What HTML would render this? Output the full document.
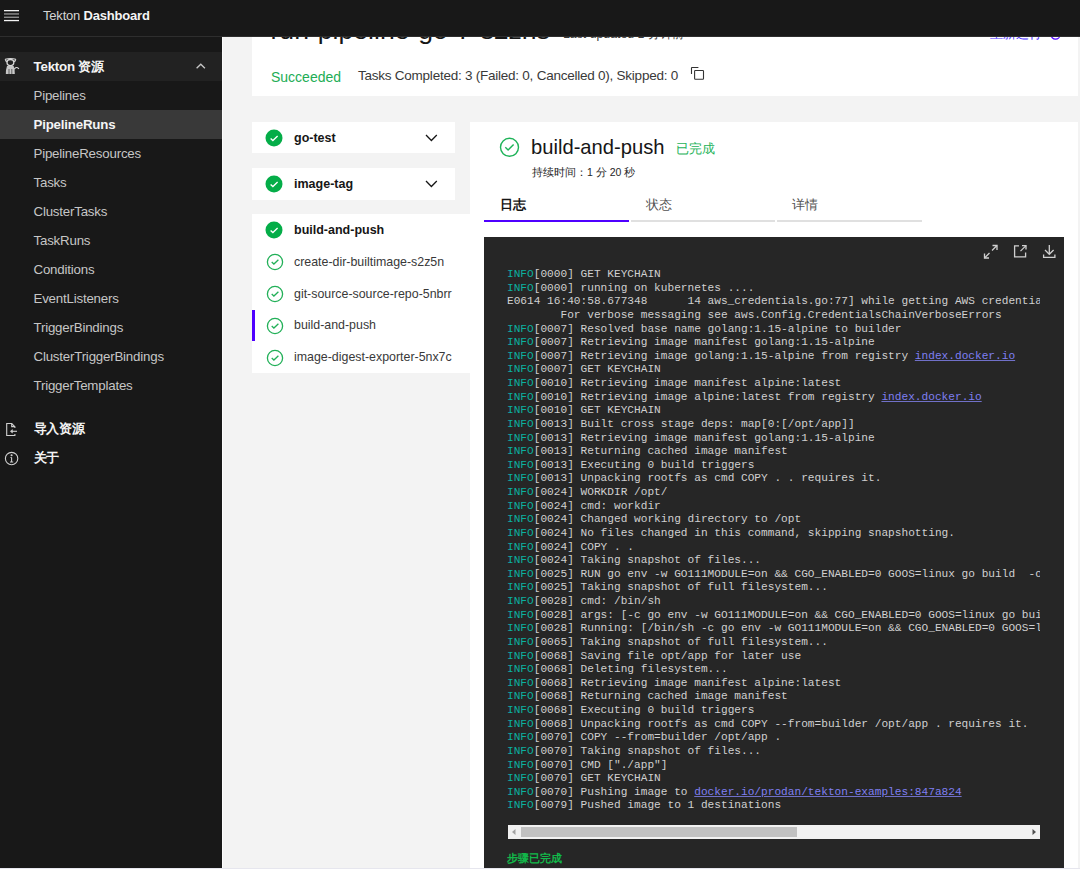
<!DOCTYPE html>
<html><head><meta charset="utf-8">
<style>
*{box-sizing:border-box;margin:0;padding:0}
html,body{width:1080px;height:869px;overflow:hidden;background:#f3f3f3;font-family:"Liberation Sans",sans-serif;position:relative}
.abs{position:absolute}
.t{position:absolute;white-space:nowrap}
#hdr{position:absolute;left:0;top:0;width:1080px;height:37px;background:#181818;border-bottom:1px solid #2e2e2e;z-index:10}
#side{position:absolute;left:0;top:37px;width:222px;height:832px;background:#181818;z-index:5}
.nav{position:absolute;left:0;width:222px;height:29px;color:#c6c6c6;font-size:13.3px;letter-spacing:-0.2px;line-height:29px;padding-left:33.5px;white-space:nowrap}
.card{position:absolute;background:#fff}
.log{position:absolute;left:507px;top:268px;width:533px;height:554px;overflow:hidden;font-family:"Liberation Mono",monospace;font-size:11.15px;line-height:13.62px;color:#d0d0d0;white-space:pre}
.log .i{color:#0cb0a0}
.log a{color:#7f7ff2;text-decoration:underline;text-decoration-color:#7070c8}
.step{position:absolute;left:294px;font-size:12.4px;color:#393939;white-space:nowrap;line-height:16px}
.tab{position:absolute;top:220px;height:2px;background:#e0e0e0}
</style></head><body>

<!-- page header title (scrolled under header) -->
<div class="card" style="left:252px;top:0;width:826px;height:96px"></div>
<div class="t" style="left:270.5px;top:14.5px;font-size:26.6px;line-height:30px;color:#161616">run-pipeline-go-7-s2zns</div>
<div class="t" style="left:563px;top:26px;font-size:12.3px;line-height:16px;color:#393939">Last updated 1 分钟前</div>
<div class="t" style="left:990px;top:25.8px;font-size:12.6px;line-height:16px;color:#4a2dff">重新运行</div>
<svg class="abs" style="left:1049px;top:28px" width="14" height="14" viewBox="0 0 14 14"><circle cx="6.5" cy="6.5" r="4.6" fill="none" stroke="#4f00ff" stroke-width="1.2"/></svg>
<div class="t" style="left:271px;top:67.5px;font-size:14px;line-height:18px;color:#22ad55">Succeeded</div>
<div class="t" style="left:358px;top:67px;font-size:13.5px;letter-spacing:-0.24px;line-height:18px;color:#393939">Tasks Completed: 3 (Failed: 0, Cancelled 0), Skipped: 0</div>
<svg class="abs" style="left:690px;top:66px" width="16" height="16" viewBox="0 0 16 16" fill="none" stroke="#333" stroke-width="1.1">
  <path d="M1.5 8.1 V2 Q1.5 1.5 2 1.5 H8.4"/>
  <rect x="4.6" y="4.5" width="8.9" height="8.8" rx="0.7"/>
</svg>

<!-- task cards -->
<div class="card" style="left:252px;top:122px;width:203px;height:31px"></div>
<div class="card" style="left:252px;top:168px;width:203px;height:32px"></div>
<div class="card" style="left:252px;top:214px;width:218px;height:159px"></div>
<div class="abs" style="left:470px;top:122px;width:0;height:0"></div>

<svg class="abs" style="left:264.0px;top:127.6px" width="20" height="20" viewBox="0 0 20 20"><circle cx="10" cy="10" r="8.5" fill="#04ad48"/><path d="M6.6 10.4 L8.9 12.5 L13.6 8" fill="none" stroke="#fff" stroke-width="1.3"/></svg>
<div class="t" style="left:294px;top:130px;font-size:12.5px;font-weight:bold;line-height:16px;color:#161616">go-test</div>
<svg class="abs" style="left:425px;top:134px" width="13" height="8" viewBox="0 0 13 8"><path d="M1 1 L6.4 6.5 L11.8 1" fill="none" stroke="#161616" stroke-width="1.3"/></svg>
<svg class="abs" style="left:264.0px;top:173.6px" width="20" height="20" viewBox="0 0 20 20"><circle cx="10" cy="10" r="8.5" fill="#04ad48"/><path d="M6.6 10.4 L8.9 12.5 L13.6 8" fill="none" stroke="#fff" stroke-width="1.3"/></svg>
<div class="t" style="left:294px;top:176px;font-size:12.5px;font-weight:bold;line-height:16px;color:#161616">image-tag</div>
<svg class="abs" style="left:425px;top:180px" width="13" height="8" viewBox="0 0 13 8"><path d="M1 1 L6.4 6.5 L11.8 1" fill="none" stroke="#161616" stroke-width="1.3"/></svg>
<svg class="abs" style="left:264.0px;top:220.1px" width="20" height="20" viewBox="0 0 20 20"><circle cx="10" cy="10" r="8.5" fill="#04ad48"/><path d="M6.6 10.4 L8.9 12.5 L13.6 8" fill="none" stroke="#fff" stroke-width="1.3"/></svg>
<div class="t" style="left:294px;top:222px;font-size:12.5px;font-weight:bold;line-height:16px;color:#161616">build-and-push</div>

<svg class="abs" style="left:264.5px;top:252.3px" width="20" height="20" viewBox="0 0 20 20"><circle cx="10" cy="10" r="7.6" fill="none" stroke="#22b058" stroke-width="1.3"/><path d="M6.7 10 L8.9 12 L13.4 7.7" fill="none" stroke="#22b058" stroke-width="1.3"/></svg>
<div class="step" style="top:254px">create-dir-builtimage-s2z5n</div>
<svg class="abs" style="left:264.5px;top:284.0px" width="20" height="20" viewBox="0 0 20 20"><circle cx="10" cy="10" r="7.6" fill="none" stroke="#22b058" stroke-width="1.3"/><path d="M6.7 10 L8.9 12 L13.4 7.7" fill="none" stroke="#22b058" stroke-width="1.3"/></svg>
<div class="step" style="top:286px">git-source-source-repo-5nbrr</div>
<div class="abs" style="left:252px;top:310px;width:3px;height:31px;background:#4f00ff"></div>
<svg class="abs" style="left:264.5px;top:315.6px" width="20" height="20" viewBox="0 0 20 20"><circle cx="10" cy="10" r="7.6" fill="none" stroke="#22b058" stroke-width="1.3"/><path d="M6.7 10 L8.9 12 L13.4 7.7" fill="none" stroke="#22b058" stroke-width="1.3"/></svg>
<div class="step" style="top:317px">build-and-push</div>
<svg class="abs" style="left:264.5px;top:347.6px" width="20" height="20" viewBox="0 0 20 20"><circle cx="10" cy="10" r="7.6" fill="none" stroke="#22b058" stroke-width="1.3"/><path d="M6.7 10 L8.9 12 L13.4 7.7" fill="none" stroke="#22b058" stroke-width="1.3"/></svg>
<div class="step" style="top:349px">image-digest-exporter-5nx7c</div>

<!-- right panel -->
<div class="card" style="left:470px;top:122px;width:608px;height:747px"></div>
<svg class="abs" style="left:499px;top:137px" width="21" height="21" viewBox="0 0 21 21"><circle cx="10.5" cy="10.3" r="9" fill="none" stroke="#1fb359" stroke-width="1.4"/><path d="M6.3 10.3 L9.1 13 L14.6 7.5" fill="none" stroke="#1fb359" stroke-width="1.4"/></svg>
<div class="t" style="left:531px;top:135px;font-size:20.2px;line-height:24px;color:#161616">build-and-push</div>
<div class="t" style="left:675.5px;top:139.5px;font-size:13.3px;line-height:18px;color:#1db359">已完成</div>
<div class="t" style="left:532px;top:165px;font-size:10.5px;line-height:14px;color:#262626">持续时间：1 分 20 秒</div>

<div class="t" style="left:499.5px;top:196px;font-size:13.3px;font-weight:bold;line-height:18px;color:#161616">日志</div>
<div class="t" style="left:646px;top:196px;font-size:13.3px;line-height:18px;color:#525252">状态</div>
<div class="t" style="left:792px;top:196px;font-size:13.3px;line-height:18px;color:#525252">详情</div>
<div class="tab" style="left:484px;width:145px;background:#4f00ff"></div>
<div class="tab" style="left:631px;width:144px"></div>
<div class="tab" style="left:777px;width:145px"></div>

<div class="abs" style="left:484px;top:237px;width:580px;height:631px;background:#262626"></div>
<svg class="abs" style="left:983px;top:244px" width="16" height="16" viewBox="0 0 16 16" fill="none" stroke="#d0d0d0" stroke-width="1.3">
  <path d="M9.5 1.5 H14 V6"/><path d="M14 1.5 L9 6.5"/><path d="M1.5 9.5 V14 H6"/><path d="M1.5 14 L6.5 9"/>
</svg>
<svg class="abs" style="left:1013px;top:244px" width="16" height="16" viewBox="0 0 16 16" fill="none" stroke="#d0d0d0" stroke-width="1.3">
  <path d="M6 1.8 H1.6 V12.8 H12.6 V8.5"/><path d="M9 1.6 H13 V5.6"/><path d="M13 1.6 L7.5 7.1"/>
</svg>
<svg class="abs" style="left:1042px;top:244px" width="16" height="16" viewBox="0 0 16 16" fill="none" stroke="#d0d0d0" stroke-width="1.3">
  <path d="M7.3 1 V10"/><path d="M3 6 L7.3 10.3 L11.6 6"/><path d="M1.6 10.5 V13.3 H12.9 V10.5"/>
</svg>

<div class="log"><span class="i">INFO</span>[0000] GET KEYCHAIN
<span class="i">INFO</span>[0000] running on kubernetes ....
E0614 16:40:58.677348      14 aws_credentials.go:77] while getting AWS credentials NoCredentialProviders: no valid providers in chain. Deprecated.
        For verbose messaging see aws.Config.CredentialsChainVerboseErrors
<span class="i">INFO</span>[0007] Resolved base name golang:1.15-alpine to builder
<span class="i">INFO</span>[0007] Retrieving image manifest golang:1.15-alpine
<span class="i">INFO</span>[0007] Retrieving image golang:1.15-alpine from registry <a>index.docker.io</a>
<span class="i">INFO</span>[0007] GET KEYCHAIN
<span class="i">INFO</span>[0010] Retrieving image manifest alpine:latest
<span class="i">INFO</span>[0010] Retrieving image alpine:latest from registry <a>index.docker.io</a>
<span class="i">INFO</span>[0010] GET KEYCHAIN
<span class="i">INFO</span>[0013] Built cross stage deps: map[0:[/opt/app]]
<span class="i">INFO</span>[0013] Retrieving image manifest golang:1.15-alpine
<span class="i">INFO</span>[0013] Returning cached image manifest
<span class="i">INFO</span>[0013] Executing 0 build triggers
<span class="i">INFO</span>[0013] Unpacking rootfs as cmd COPY . . requires it.
<span class="i">INFO</span>[0024] WORKDIR /opt/
<span class="i">INFO</span>[0024] cmd: workdir
<span class="i">INFO</span>[0024] Changed working directory to /opt
<span class="i">INFO</span>[0024] No files changed in this command, skipping snapshotting.
<span class="i">INFO</span>[0024] COPY . .
<span class="i">INFO</span>[0024] Taking snapshot of files...
<span class="i">INFO</span>[0025] RUN go env -w GO111MODULE=on &amp;&amp; CGO_ENABLED=0 GOOS=linux go build  -o app .
<span class="i">INFO</span>[0025] Taking snapshot of full filesystem...
<span class="i">INFO</span>[0028] cmd: /bin/sh
<span class="i">INFO</span>[0028] args: [-c go env -w GO111MODULE=on &amp;&amp; CGO_ENABLED=0 GOOS=linux go build  -o app .]
<span class="i">INFO</span>[0028] Running: [/bin/sh -c go env -w GO111MODULE=on &amp;&amp; CGO_ENABLED=0 GOOS=linux go build  -o app .]
<span class="i">INFO</span>[0065] Taking snapshot of full filesystem...
<span class="i">INFO</span>[0068] Saving file opt/app for later use
<span class="i">INFO</span>[0068] Deleting filesystem...
<span class="i">INFO</span>[0068] Retrieving image manifest alpine:latest
<span class="i">INFO</span>[0068] Returning cached image manifest
<span class="i">INFO</span>[0068] Executing 0 build triggers
<span class="i">INFO</span>[0068] Unpacking rootfs as cmd COPY --from=builder /opt/app . requires it.
<span class="i">INFO</span>[0070] COPY --from=builder /opt/app .
<span class="i">INFO</span>[0070] Taking snapshot of files...
<span class="i">INFO</span>[0070] CMD ["./app"]
<span class="i">INFO</span>[0070] GET KEYCHAIN
<span class="i">INFO</span>[0070] Pushing image to <a>docker.io/prodan/tekton-examples:847a824</a>
<span class="i">INFO</span>[0079] Pushed image to 1 destinations</div>

<div class="abs" style="left:508px;top:825px;width:532px;height:14px;background:#f1f1f1"></div>
<div class="abs" style="left:521px;top:827px;width:276px;height:10px;background:#c1c1c1"></div>
<svg class="abs" style="left:510px;top:827px" width="8" height="10" viewBox="0 0 8 10"><path d="M5.5 2 L2 5 L5.5 8 Z" fill="#a3a3a3"/></svg>
<svg class="abs" style="left:1030px;top:827px" width="8" height="10" viewBox="0 0 8 10"><path d="M2.5 2 L6 5 L2.5 8 Z" fill="#505050"/></svg>
<div class="t" style="left:507px;top:850px;font-size:11px;font-weight:bold;line-height:16px;color:#12b84a">步骤已完成</div>
<div class="abs" style="left:0;top:868px;width:1080px;height:1px;background:#e6e6ee;z-index:20"></div>

<!-- header -->
<div id="hdr">
  <svg class="abs" style="left:4px;top:9px" width="16" height="13" viewBox="0 0 16 13">
    <rect x="0" y="1" width="15" height="1.3" fill="#f4f4f4"/>
    <rect x="0" y="4.3" width="15" height="1.3" fill="#9a9a9a"/>
    <rect x="0" y="7.6" width="15" height="1.3" fill="#9a9a9a"/>
    <rect x="0" y="10.9" width="15" height="1.3" fill="#f4f4f4"/>
  </svg>
  <div class="t" style="left:43px;top:7px;font-size:13px;letter-spacing:-0.2px;line-height:18px;color:#d4d4d4">Tekton <b style="color:#f4f4f4">Dashboard</b></div>
</div>

<div class="abs" style="left:222px;top:37px;width:1px;height:832px;background:#fcfcfc"></div>
<div id="side">
  <div class="nav" style="top:15px;background:#222222;color:#f4f4f4;font-weight:bold">Tekton 资源</div>
  <svg class="abs" style="left:0;top:15px" width="24" height="29" viewBox="0 0 24 29">
    <path d="M5.2 7.2 L6.6 10 M15.8 7.2 L14.4 10" stroke="#d8d8d8" stroke-width="1.3" fill="none"/>
    <path d="M5.2 7.2 Q10.5 5.8 15.8 7.2" stroke="#d8d8d8" stroke-width="1.1" fill="none"/>
    <ellipse cx="10.4" cy="10.6" rx="3.4" ry="3.1" stroke="#d8d8d8" stroke-width="1.3" fill="none"/>
    <path d="M7 14 Q5.6 18 5.8 22 H14.8 Q15 18 13.6 14 Z" fill="#c8c8c8"/>
    <path d="M9 17 V22 M11.8 17 V22" stroke="#555" stroke-width="0.9"/>
    <path d="M14.2 17.2 Q16.2 14 18.9 16.8" stroke="#d8d8d8" stroke-width="1.2" fill="none"/>
  </svg>
  <svg class="abs" style="left:194px;top:24px" width="13" height="8" viewBox="0 0 13 8"><path d="M2.6 7.3 L6.8 3.2 L10.9 7.3" fill="none" stroke="#c6c6c6" stroke-width="1.3"/></svg>
  <div class="nav" style="top:44px">Pipelines</div>
  <div class="nav" style="top:73px;background:#393939;color:#f4f4f4;font-weight:bold">PipelineRuns</div>
  <div class="nav" style="top:102px">PipelineResources</div>
  <div class="nav" style="top:131px">Tasks</div>
  <div class="nav" style="top:160px">ClusterTasks</div>
  <div class="nav" style="top:189px">TaskRuns</div>
  <div class="nav" style="top:218px">Conditions</div>
  <div class="nav" style="top:247px">EventListeners</div>
  <div class="nav" style="top:276px">TriggerBindings</div>
  <div class="nav" style="top:305px">ClusterTriggerBindings</div>
  <div class="nav" style="top:334px">TriggerTemplates</div>
  <svg class="abs" style="left:4px;top:384px" width="16" height="17" viewBox="0 0 16 17" fill="none" stroke="#d0d0d0" stroke-width="1.1">
    <path d="M10.9 7 V5.8 L7.7 2.5 H2.7 V14.5 H10.9 V13"/><path d="M7.7 2.5 V5.6 H10.9"/><path d="M8 10.3 H13"/><path d="M6.4 10.3 L8.4 8.6 V12 Z" fill="#d0d0d0" stroke-width="0.6"/>
  </svg>
  <div class="nav" style="top:377px;color:#f4f4f4;font-weight:bold">导入资源</div>
  <svg class="abs" style="left:4px;top:414px" width="16" height="16" viewBox="0 0 16 16" fill="none" stroke="#d0d0d0" stroke-width="1.1">
    <circle cx="7.6" cy="7.6" r="6.2"/><path d="M7.6 6.5 V11 M6 11 H9.2 M6.5 6.5 H7.6"/><circle cx="7.6" cy="4.3" r="0.5" fill="#d0d0d0"/>
  </svg>
  <div class="nav" style="top:406px;color:#f4f4f4;font-weight:bold">关于</div>
</div>
</body></html>
